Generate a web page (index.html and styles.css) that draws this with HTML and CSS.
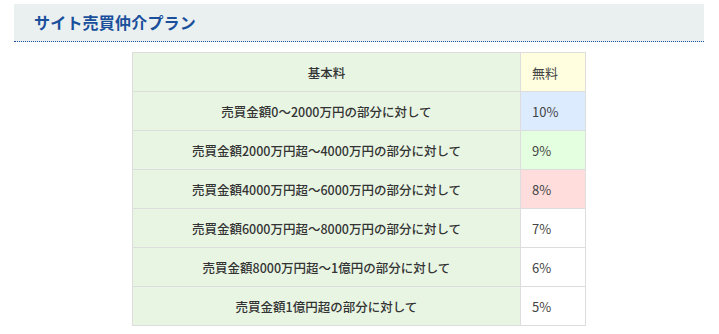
FILE: index.html
```html
<!DOCTYPE html>
<html lang="ja">
<head>
<meta charset="utf-8">
<link rel="stylesheet" href="styles.css">
</head>
<body>
<div class="page">
  <h2 class="heading">サイト売買仲介プラン</h2>
  <table class="plan">
    <tr><th>基本料</th><td class="c-yellow">無料</td></tr>
    <tr><th>売買金額0～2000万円の部分に対して</th><td class="c-blue">10%</td></tr>
    <tr><th>売買金額2000万円超～4000万円の部分に対して</th><td class="c-green">9%</td></tr>
    <tr><th>売買金額4000万円超～6000万円の部分に対して</th><td class="c-pink">8%</td></tr>
    <tr><th>売買金額6000万円超～8000万円の部分に対して</th><td>7%</td></tr>
    <tr><th>売買金額8000万円超～1億円の部分に対して</th><td>6%</td></tr>
    <tr><th>売買金額1億円超の部分に対して</th><td>5%</td></tr>
  </table>
</div>
</body>
</html>
```
FILE: styles.css
```css
html, body {
  margin: 0;
  padding: 0;
  background: #fff;
}
.page {
  padding: 4px 15px 0 14px;
  font-family: "Noto Sans CJK JP", "Noto Sans", sans-serif;
}
.heading {
  margin: 0;
  height: 37px;
  background: #eaf0f0;
  border-bottom: 1px dotted #1a4f9c;
  color: #1a4f9c;
  font-size: 16px;
  font-weight: 700;
  line-height: 37px;
  padding-left: 20px;
  letter-spacing: 0.2px;
}
.plan {
  margin: 10px 0 0 118px;
  border-collapse: collapse;
  font-size: 12.5px;
}
.plan th, .plan td {
  border: 1px solid #dddddd;
  height: 39px;
  padding: 0;
  box-sizing: border-box;
}
.plan th {
  width: 388px;
  background: #e8f5e3;
  color: #333;
  font-weight: 500;
  text-align: center;
}
.plan td {
  width: 65px;
  background: #fff;
  color: #444;
  font-weight: 400;
  font-size: 13px;
  text-align: left;
  padding-left: 11px;
}
.plan td.c-yellow { background: #ffffe0; }
.plan td.c-blue { background: #ddebff; }
.plan td.c-green { background: #e3ffdf; }
.plan td.c-pink { background: #ffdddd; }
```
